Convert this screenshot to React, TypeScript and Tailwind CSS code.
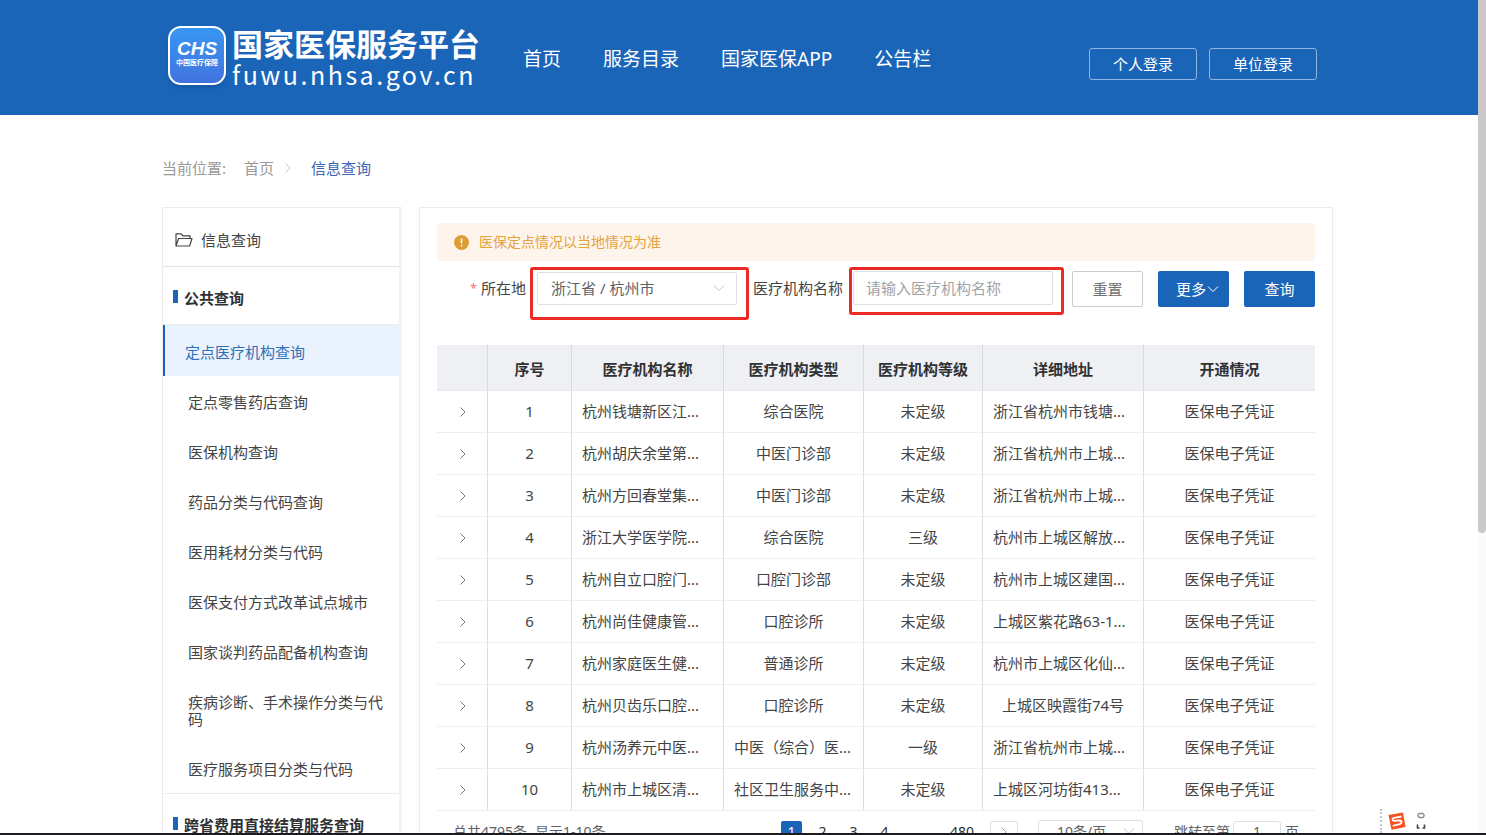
import clsx from 'clsx'

const navLinks = ['首页', '服务目录', '国家医保APP', '公告栏']

const menuItems = [
  '定点医疗机构查询',
  '定点零售药店查询',
  '医保机构查询',
  '药品分类与代码查询',
  '医用耗材分类与代码',
  '医保支付方式改革试点城市',
  '国家谈判药品配备机构查询',
  '疾病诊断、手术操作分类与代码',
  '医疗服务项目分类与代码',
]

const columns = [
  { title: '', width: 'w-[51px]' },
  { title: '序号', width: 'w-[84px]' },
  { title: '医疗机构名称', width: 'w-[152px]' },
  { title: '医疗机构类型', width: 'w-[140px]' },
  { title: '医疗机构等级', width: 'w-[119px]' },
  { title: '详细地址', width: 'w-[161px]' },
  { title: '开通情况', width: 'w-[171px]' },
]

const rows = [
  ['1', '杭州钱塘新区江...', '综合医院', '未定级', '浙江省杭州市钱塘...', '医保电子凭证'],
  ['2', '杭州胡庆余堂第...', '中医门诊部', '未定级', '浙江省杭州市上城...', '医保电子凭证'],
  ['3', '杭州方回春堂集...', '中医门诊部', '未定级', '浙江省杭州市上城...', '医保电子凭证'],
  ['4', '浙江大学医学院...', '综合医院', '三级', '杭州市上城区解放...', '医保电子凭证'],
  ['5', '杭州自立口腔门...', '口腔门诊部', '未定级', '杭州市上城区建国...', '医保电子凭证'],
  ['6', '杭州尚佳健康管...', '口腔诊所', '未定级', '上城区紫花路63-1...', '医保电子凭证'],
  ['7', '杭州家庭医生健...', '普通诊所', '未定级', '杭州市上城区化仙...', '医保电子凭证'],
  ['8', '杭州贝齿乐口腔...', '口腔诊所', '未定级', '上城区映霞街74号', '医保电子凭证'],
  ['9', '杭州汤养元中医...', '中医（综合）医...', '一级', '浙江省杭州市上城...', '医保电子凭证'],
  ['10', '杭州市上城区清...', '社区卫生服务中...', '未定级', '上城区河坊街413...', '医保电子凭证'],
]

function Chevron({ dir, className }: { dir: 'right' | 'down'; className?: string }) {
  return (
    <svg viewBox="0 0 12 12" fill="none" stroke="currentColor" className={className} aria-hidden="true">
      <path d={dir === 'right' ? 'M3.5 1.5 8 6l-4.5 4.5' : 'M1 3.5 6 8.5l5-5'} />
    </svg>
  )
}

function Header() {
  return (
    <header className="flex h-[115px] shrink-0 items-start bg-[#1b65b9] pl-[168px] pr-[161px] text-white">
      <a href="#" className="flex items-start pt-6">
        <div className="mt-[2px] flex h-[59px] w-[58px] flex-col items-center rounded-[13px] border-2 border-white bg-linear-to-b from-[#3796f3] to-[#4173df] pt-3 shadow-md">
          <span className="font-['Liberation_Sans'] text-[19px] font-bold italic leading-[18px]">CHS</span>
          <span className="whitespace-nowrap text-[7px] font-bold leading-[9px]">中国医疗保障</span>
        </div>
        <div className="ml-[6px]">
          <div className="whitespace-nowrap text-[31px] font-bold leading-10">国家医保服务平台</div>
          <div className="font-['Noto_Sans_CJK_SC'] text-[25px] leading-[20px] tracking-widest">fuwu.nhsa.gov.cn</div>
        </div>
      </a>
      <nav className="ml-[43px] flex gap-[42px] whitespace-nowrap pt-[45px] text-[19px] leading-7">
        {navLinks.map((link) => (
          <a key={link} href="#">{link}</a>
        ))}
      </nav>
      <div className="ml-auto flex shrink-0 gap-3 pt-12 text-[15px]">
        <button className="h-8 w-[108px] rounded-[3px] border border-[#8fb6e2]">个人登录</button>
        <button className="h-8 w-[108px] rounded-[3px] border border-[#8fb6e2]">单位登录</button>
      </div>
    </header>
  )
}

function SectionTitle({ children }: { children: string }) {
  return (
    <h2 className="flex h-[57px] items-center gap-[6px] pl-[10px] pt-[5px] font-bold leading-5 text-[#303133]">
      <span className="mb-1 h-[13px] w-[5px] bg-[#1b65b9]" />
      {children}
    </h2>
  )
}

function Sidebar() {
  return (
    <aside className="w-60 shrink-0 border border-r-3 border-[#ececec] border-r-[#f3f3f3]">
      <div className="flex h-[59px] items-center gap-2 border-b border-[#e4e4e4] pl-3 pt-[6px]">
        <svg viewBox="0 0 18 16" fill="none" stroke="currentColor" strokeWidth="1.2" strokeLinejoin="round" className="h-4 w-[18px]">
          <path d="M1 14V1.8h5.2l1.6 2H15v2.7M1 14 3.6 6.5H17L14.6 14z" />
        </svg>
        信息查询
      </div>
      <SectionTitle>公共查询</SectionTitle>
      <ul className="border-y border-[#ececec]">
        {menuItems.map((item, i) => (
          <li key={item}>
            <a
              href="#"
              className={clsx(
                'block pb-[15px] pr-3 leading-[17px]',
                i === 0
                  ? 'border-l-2 border-[#1b65b9] bg-[#eaf3fd] pl-5 pt-[19px] text-[#2f6fba]'
                  : 'pl-[25px] pt-[18px]',
              )}
            >
              {item}
            </a>
          </li>
        ))}
      </ul>
      <SectionTitle>跨省费用直接结算服务查询</SectionTitle>
    </aside>
  )
}

function SearchForm() {
  return (
    <form className="mt-[6px] flex items-start whitespace-nowrap">
      <label htmlFor="region" className="flex h-[43px] w-[93px] items-center justify-end pr-1">
        <span className="mr-1 text-xs text-[#f56c6c]">*</span>所在地
      </label>
      <div className="h-[53px] w-[219px] rounded-[3px] border-3 border-[#ec2a24] pl-1 pr-[9px] pt-[2px]">
        <div className="relative">
          <select id="region" className="h-[33px] w-full appearance-none rounded-[2px] border border-[#dcdfe6] bg-white pl-[13px] text-[#606266]">
            <option>浙江省 / 杭州市</option>
          </select>
          <Chevron dir="down" className="pointer-events-none absolute right-3 top-[10px] h-3 w-3 text-[#c0c4cc]" />
        </div>
      </div>
      <label htmlFor="org" className="flex h-[43px] w-[100px] items-center pl-1">医疗机构名称</label>
      <div className="h-12 w-[215px] rounded-[3px] border-3 border-[#ec2a24] pl-px pr-2 pt-px">
        <input
          id="org"
          type="text"
          placeholder="请输入医疗机构名称"
          className="h-[34px] w-full rounded-[2px] border border-[#dcdfe6] pl-3 placeholder:text-[#a0a3a9]"
        />
      </div>
      <div className="ml-auto flex gap-[15px] pt-1">
        <button type="reset" className="h-9 w-[71px] rounded-[2px] border border-[#c9ccd2] text-[#707276]">重置</button>
        <button type="button" className="flex h-9 w-[71px] items-center justify-end rounded-[2px] bg-[#1b65b9] pr-[10px] text-white">
          更多
          <Chevron dir="down" className="ml-px h-3 w-3" />
        </button>
        <button type="submit" className="h-9 w-[71px] rounded-[2px] bg-[#1b65b9] text-white">查询</button>
      </div>
    </form>
  )
}

function ResultTable() {
  return (
    <table className="mt-[25px] w-full table-fixed border-separate border-spacing-0 text-center">
      <thead>
        <tr className="h-[46px] bg-[#eef0f4] text-[#303133]">
          {columns.map((col) => (
            <th key={col.title} className={clsx(col.width, 'border-b border-r border-b-[#e6e8ec] border-r-[#d8dade] pt-1 font-bold last:border-r-0')}>
              {col.title}
            </th>
          ))}
        </tr>
      </thead>
      <tbody>
        {rows.map((row) => (
          <tr key={row[0]} className="h-[42px]">
            <td className="border-b border-r border-b-[#ebeef5] border-r-[#dcdde0]">
              <button aria-label="展开" className="block pl-5">
                <Chevron dir="right" className="h-3 w-3 text-[#777777]" />
              </button>
            </td>
            {row.map((cell, i) => (
              <td
                key={i}
                className={clsx(
                  'overflow-hidden whitespace-nowrap border-b border-r border-b-[#ebeef5] border-r-[#dcdde0] px-[10px] last:border-r-0',
                  cell.endsWith('...') && 'text-left',
                )}
              >
                {cell}
              </td>
            ))}
          </tr>
        ))}
      </tbody>
    </table>
  )
}

function Pagination() {
  return (
    <div className="flex items-center whitespace-nowrap pl-4 pr-4 pt-[9px] text-sm leading-[22px] text-[#606266]">
      <span>总共4795条</span>
      <span className="ml-2">显示1-10条</span>
      <div className="ml-auto flex items-center gap-[10px] text-[#303133]">
        <button className="h-[22px] w-[21px] rounded-[2px] bg-[#1b65b9] text-white">1</button>
        <button className="w-[21px]">2</button>
        <button className="w-[21px]">3</button>
        <button className="w-[21px]">4</button>
      </div>
      <button className="ml-[55px] text-[#303133]">480</button>
      <button aria-label="下一页" className="ml-4 flex h-[22px] w-7 items-center justify-center rounded-[2px] border border-[#dcdfe6]">
        <Chevron dir="right" className="h-3 w-3 text-[#a0a3a9]" />
      </button>
      <div className="relative ml-5">
        <select aria-label="每页条数" className="h-[22px] w-[105px] appearance-none rounded-[3px] border border-[#dcdfe6] bg-white pl-[18px]">
          <option>10条/页</option>
        </select>
        <Chevron dir="down" className="pointer-events-none absolute right-2 top-[5px] h-3 w-3 text-[#c0c4cc]" />
      </div>
      <label htmlFor="page" className="ml-[31px]">跳转至第</label>
      <input id="page" type="text" defaultValue="1" className="ml-[3px] h-[22px] w-12 rounded-[3px] border border-[#dcdfe6] text-center" />
      <span className="ml-1">页</span>
    </div>
  )
}

function ImeBar() {
  return (
    <div className="absolute bottom-[2px] right-[60px] flex items-center gap-[6px]">
      <span className="h-6 border-l-2 border-dotted border-[#c4c4c4]" />
      <svg viewBox="0 0 18 18" className="size-[18px]" aria-hidden="true">
        <path d="M.5 3 15 .5 17.500 15 3.500 17.800z" fill="#f4511e" />
        <path d="M13.500 4.500 6 5.800q-1.800.5-1.400 2 .4 1.200 1.900 1l5-.4q1.900 0 2 1.600 0 1.800-1.800 2.200L4.800 13.800" fill="none" stroke="#fff" strokeWidth="1.800" />
      </svg>
      <svg viewBox="0 0 10 20" fill="none" className="ml-1 h-5 w-[10px]" aria-hidden="true">
        <path d="M3 2.500Q.8 4.500 3 6.500M7 2.500q2.200 2 0 4M3 2.500h4M3 6.500h4" stroke="#8a8a8a" strokeWidth="1.400" />
        <path d="M1.500 13.500V17h2M8.500 13.500V17h-2" stroke="#444" strokeWidth="1.600" />
      </svg>
    </div>
  )
}

export default function App() {
  return (
    <div className="relative flex h-screen flex-col overflow-hidden bg-white font-['Noto_Sans','Noto_Sans_CJK_SC',sans-serif] text-[15px] text-[#444444]">
      <div className="flex min-h-0 flex-1">
        <div className="flex min-w-0 flex-1 flex-col overflow-hidden">
          <Header />
          <main className="pl-[162px] pr-[145px]">
            {/* 面包屑 */}
            <div className="flex h-[92px] items-center pt-[14px] text-[#999999]">
              <span>当前位置:</span>
              <a href="#" className="ml-[18px]">首页</a>
              <Chevron dir="right" className="ml-2 h-3 w-3 text-[#c0c4cc]" />
              <a href="#" className="ml-[17px] text-[#3a66b5]">信息查询</a>
            </div>
            <div className="flex items-start gap-[17px]">
              <Sidebar />
              <section className="min-w-0 flex-1 border border-[#ececec] px-[17px] pb-10 pt-[15px]">
                <div className="flex h-[38px] items-center gap-[10px] rounded-[3px] bg-[#fdf5ec] pl-[17px] text-sm text-[#e6a23c]">
                  <svg viewBox="0 0 15 15" className="size-[15px]" aria-hidden="true">
                    <circle cx="7.500" cy="7.500" r="7.500" fill="#dc9d35" />
                    <path d="M7.500 3.500v5M7.500 10v1.500" stroke="#fff" strokeWidth="1.500" />
                  </svg>
                  医保定点情况以当地情况为准
                </div>
                <SearchForm />
                <ResultTable />
                <Pagination />
              </section>
            </div>
          </main>
        </div>
        {/* 滚动条 */}
        <div className="w-2 shrink-0 bg-[#fafafa]">
          <div className="h-[64%] rounded-b-[4px] bg-[#c9c9c9]" />
        </div>
      </div>
      <ImeBar />
      <div className="h-[2px] shrink-0 bg-[#1c1c20]" />
    </div>
  )
}
